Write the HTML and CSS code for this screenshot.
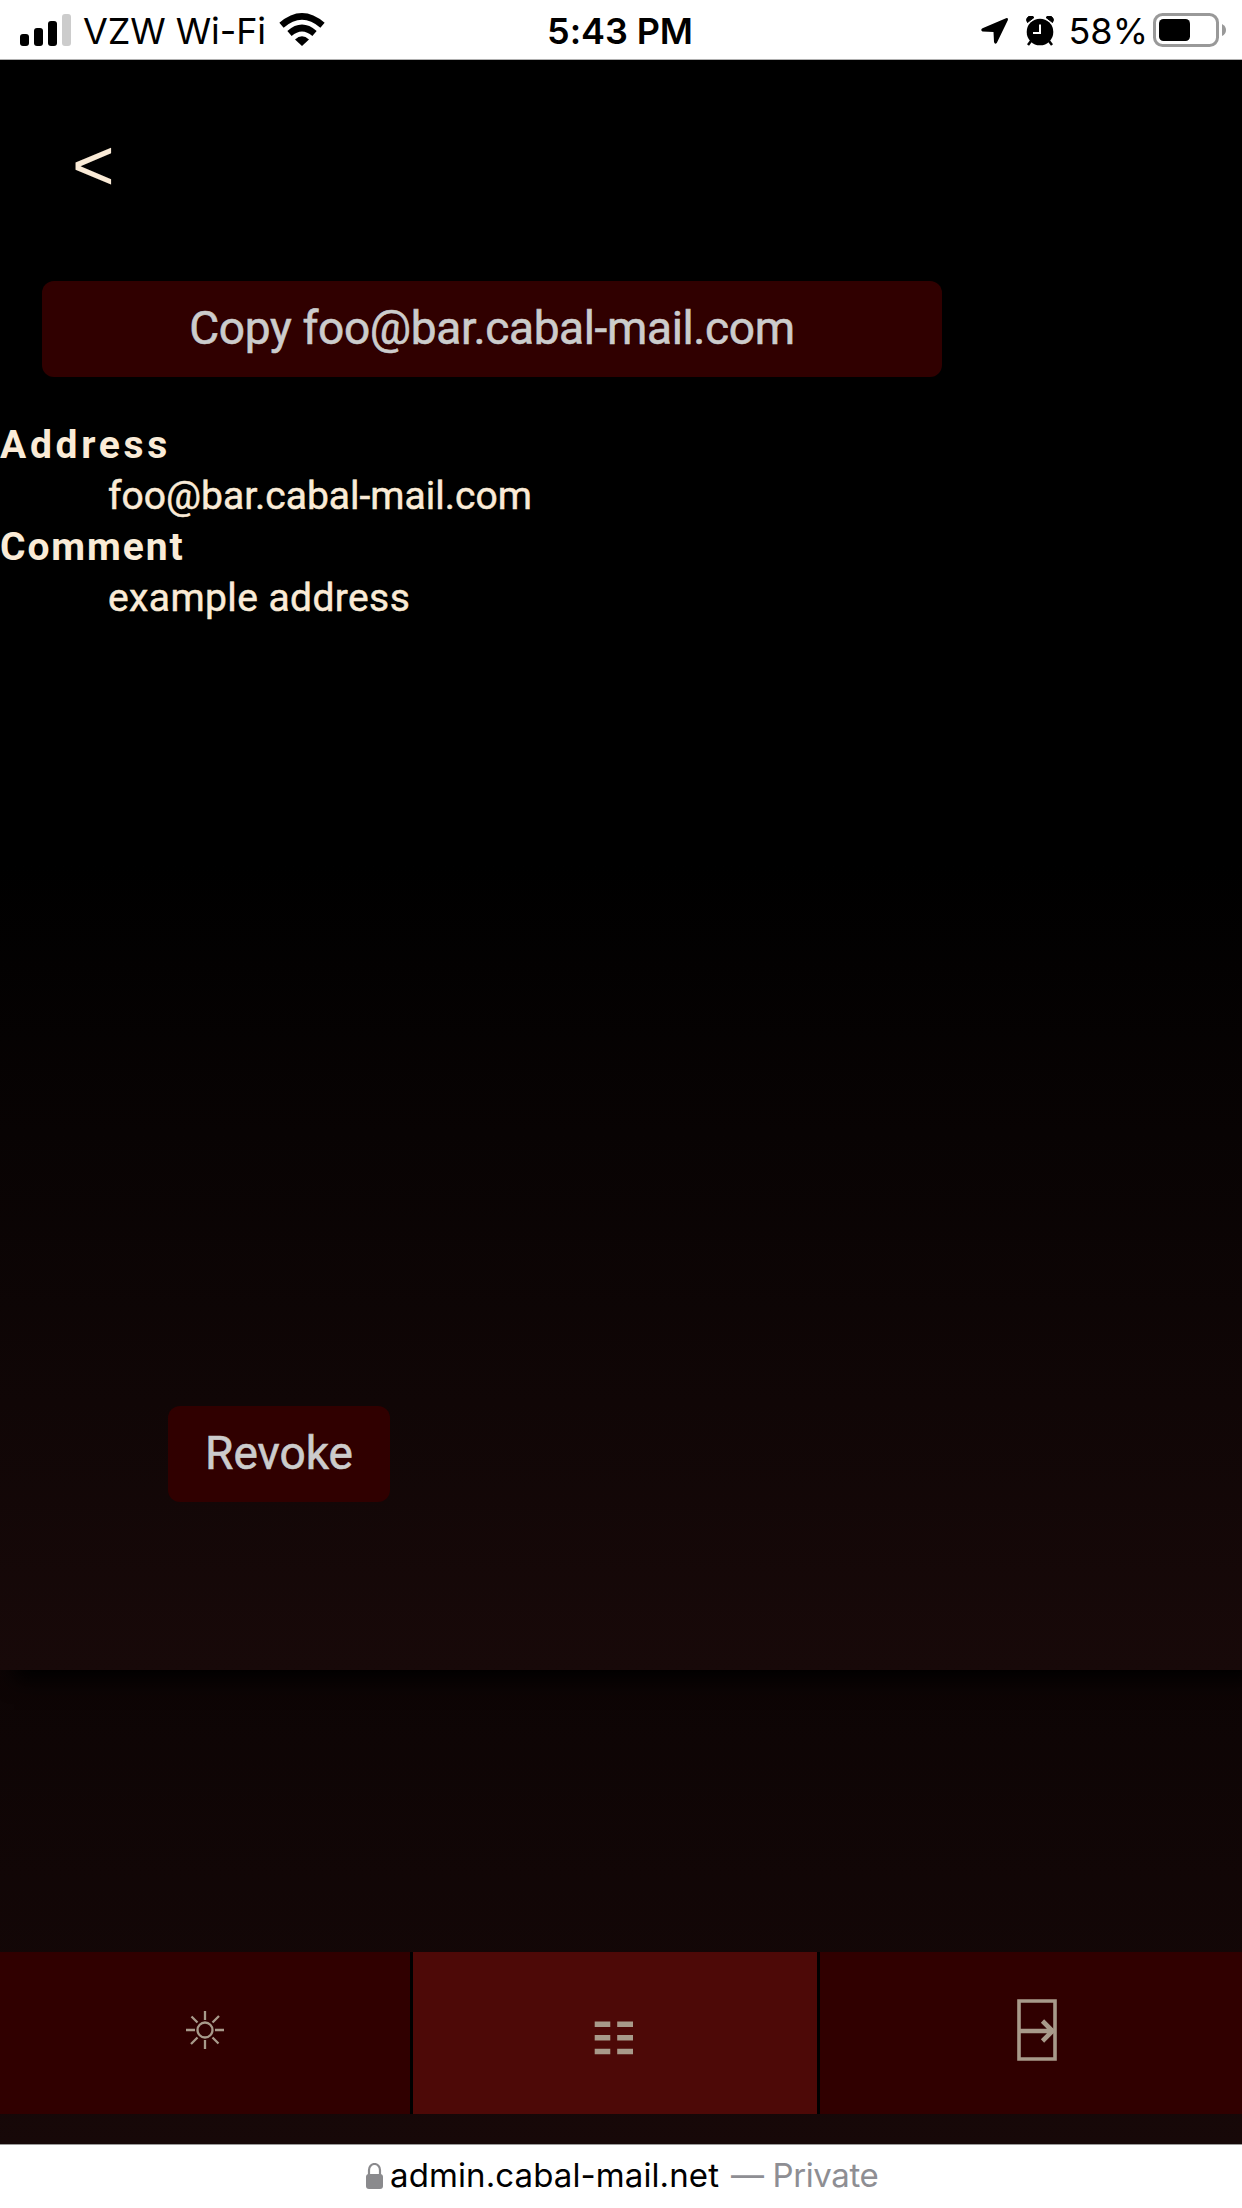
FILE: index.html
```html
<!DOCTYPE html>
<html lang="en">
<head>
<meta charset="utf-8">
<title>Cabal Mail</title>
<link rel="stylesheet" href="styles.css">
</head>
<body>
<header class="status">
  <div class="status-side">
    <svg class="signal" width="52" height="32" viewBox="0 0 52 32"><rect x="0" y="20" width="9" height="12" rx="3"/><rect x="14" y="14" width="9" height="18" rx="3"/><rect x="28" y="7" width="9" height="25" rx="3"/><rect x="42" y="0" width="9" height="32" rx="3" fill="#ccc"/></svg>
    <span class="carrier">VZW Wi-Fi</span>
    <svg class="wifi" width="46" height="34" viewBox="0 0 46 34"><path d="M23 33 16 26.500Q23 20 30 26.500Z"/><path d="M10.500 20.500Q23 9.500 35.500 20.500M2.500 12.300Q23-5.500 43.500 12.300" fill="none" stroke="#000" stroke-width="6.500"/></svg>
  </div>
  <span class="clock">5:43 PM</span>
  <div class="status-side status-right">
    <svg class="location" width="28" height="28" viewBox="0 0 28 28"><path d="M25 1.200 1.500 11.300Q-1 13 1.500 14.500L12.500 15 13 25Q14 28 15.900 25.700L26.800 3.300Q27.500 .5 25 1.200Z"/></svg>
    <svg class="alarm" width="28" height="30" viewBox="0 0 28 30"><circle cx="14" cy="16" r="13.300"/><path d="M5 25 2 29M23 25 26 29" stroke="#000" stroke-width="2.500"/><path d="M1.500 6.500A4 4 0 0 1 8 1.500ZM26.500 6.500A4 4 0 0 0 20 1.500Z" stroke="#000"/><path d="M14 8.500V17H7" fill="none" stroke="#fff" stroke-width="2"/></svg>
    <span class="percent">58%</span>
    <svg class="battery" width="74" height="34" viewBox="0 0 74 34"><rect x="1.500" y="1.500" width="63" height="31" rx="8" fill="none" stroke="#999" stroke-width="3"/><rect x="6" y="6" width="31" height="22" rx="4.500"/><path d="M69 11Q73 13 73 17T69 23Z" fill="#999"/></svg>
  </div>
</header>
<main class="app">
  <section class="panel">
    <a class="back">&lt;</a>
    <button class="btn btn-copy">Copy foo@bar.cabal-mail.com</button>
    <dl class="details">
      <dt class="term-address">Address</dt>
      <dd>foo@bar.cabal-mail.com</dd>
      <dt class="term-comment">Comment</dt>
      <dd class="comment">example address</dd>
    </dl>
    <button class="btn btn-revoke">Revoke</button>
  </section>
  <nav class="tabs">
    <a class="tab"><svg class="sun" width="40" height="40" viewBox="-20 -20 40 40"><circle r="7.500"/><path d="M0-10V-19M0 10V19M-10 0H-19M10 0H19M7.500-7.500 14-14M-7.500-7.500-13.500-13.500M7.500 7.500 13.500 13.500M-7.500 7.500-14 14"/></svg></a>
    <a class="tab tab-active"><svg class="list" width="40" height="34" viewBox="0 0 40 34"><path d="M.7 3.200H16.300M23.200 3.200H39M.7 16.800H16.300M23.200 16.800H39M.7 30.500H16.300M23.200 30.500H39"/></svg></a>
    <a class="tab"><svg class="door" width="40" height="62" viewBox="0 0 40 62"><path d="M2 2H38V60H2Z" stroke-width="3.600"/><path d="M2 32H36M25.500 22 35.500 32 25.500 42" stroke-width="4.600"/></svg></a>
  </nav>
</main>
<footer class="address-bar">
  <svg class="lock" width="17" height="26" viewBox="0 0 17 26"><rect y="11" width="17" height="15" rx="3"/><path d="M3 12V7A5.500 6 0 0 1 14 7V12" fill="none" stroke="#8a8a8d" stroke-width="2.200"/></svg>
  <span class="host">admin.cabal-mail.net</span>
  <span class="private">— Private</span>
</footer>
</body>
</html>
```
FILE: styles.css
```css
* { box-sizing: border-box; }
body {
  margin: 0;
  width: 1242px;
  height: 2208px;
  display: flex;
  flex-direction: column;
  background: #fff;
  font-family: Roboto, sans-serif;
  overflow: hidden;
}
svg { display: block; flex: none; }
span { white-space: nowrap; }

.status {
  height: 60px;
  display: grid;
  grid-template-columns: 1fr auto 1fr;
  padding: 0 20px;
  border-bottom: 1px solid #b0b0b0;
  font-family: Inter, sans-serif;
  font-size: 36px;
  line-height: 62px;
}
.status-side { display: flex; align-items: flex-start; }
.status-right { justify-content: flex-end; margin-right: -5px; }
.signal { margin-top: 14px; }
.carrier { margin-left: 11px; letter-spacing: -0.1px; }
.wifi { margin: 13px 0 0 13px; }
.clock { margin: 0 1px 0 -1px; font-weight: 600; letter-spacing: -0.1px; }
.location { margin-top: 17px; }
.alarm { margin: 16px 0 0 17px; }
.percent { margin-left: 14px; }
.battery { margin: 13px 0 0 5px; }

.app {
  height: 2084px;
  display: flex;
  flex-direction: column;
  background: linear-gradient(#000 50%, #170808);
  overflow: hidden;
}
.panel {
  height: 1610px;
  display: flex;
  flex-direction: column;
  align-items: flex-start;
  background: linear-gradient(#000 50%, #180909);
  box-shadow: 14px 10px 20px #000;
  color: #faebd7;
}
.back {
  height: 81px;
  margin: 64px 0 76px 72px;
  font: 73px/81px "Liberation Sans", Arial, sans-serif;
}
.btn {
  height: 96px;
  padding: 0 0 2px;
  border: 0;
  border-radius: 12px;
  background: #300000;
  color: #ccc;
  font: 46px/94px Roboto, sans-serif;
  -webkit-text-stroke: 0.6px #ccc;
}
.btn-copy { width: 900px; margin-left: 42px; letter-spacing: -0.35px; }
.btn-revoke { width: 222px; margin: auto 0 168px 168px; }

.details { margin: 43px 0 0; font-size: 39px; line-height: 51px; }
.details dt { font-weight: 700; }
.details dd { margin: 0 0 0 108px; -webkit-text-stroke: 0.5px #faebd7; }
.details .comment { letter-spacing: 0.4px; }
.term-address { letter-spacing: 3.7px; }
.term-comment { letter-spacing: 1.9px; }

.tabs {
  height: 162px;
  margin-top: 282px;
  display: grid;
  grid-template-columns: 410px 404px 422px;
  gap: 3px;
  background: #000;
}
.tab {
  display: flex;
  background: #300000;
  fill: none;
  stroke: #a89a8a;
}
.tab-active { background: #4d0907; }
.sun { margin: 58px 0 0 185px; stroke-width: 2.3; }
.list { margin: 69px 0 0 181px; stroke-width: 5.5; }
.door { margin: 47px 0 0 197px; }

.address-bar {
  flex: 1;
  display: flex;
  padding-left: 366px;
  border-top: 1px solid #9a9a9a;
  font: 33px/61px Inter, sans-serif;
}
.lock { margin: 18px 1px 0 0; fill: #8a8a8d; }
.host { margin-left: 6px; letter-spacing: 0.1px; }
.private { margin-left: 12px; color: #8e8e93; letter-spacing: -0.4px; }
```
